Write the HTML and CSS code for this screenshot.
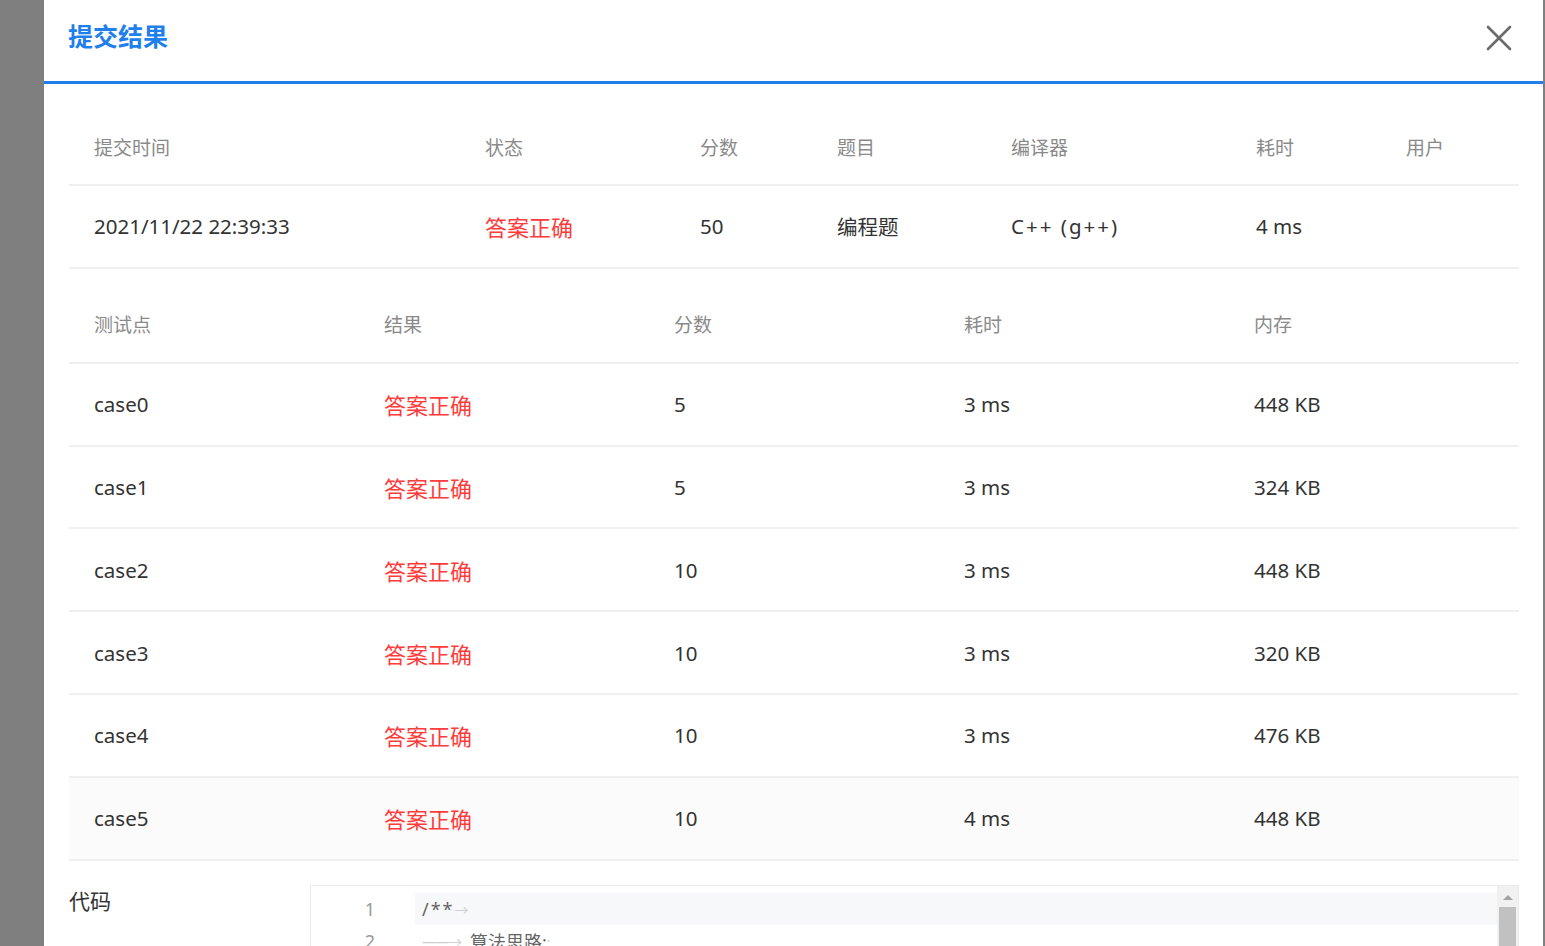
FILE: index.html
```html
<!DOCTYPE html>
<html lang="zh-CN">

<head>
  <meta charset="UTF-8">
  <meta name="viewport" content="width=device-width, initial-scale=1">
  <title>提交结果</title>
  <link rel="stylesheet" href="styles.css">
</head>

<body>

  <div class="drawer">
    <div class="drawer-header">
      <span class="drawer-title">提交结果</span>
      <svg class="close-btn" width="26" height="26" viewBox="0 0 26 26">
        <path d="M2 2 L24 24 M24 2 L2 24" stroke="#6b6b6b" stroke-width="2.6" stroke-linecap="round" fill="none" />
      </svg>
    </div>

    <div class="drawer-body">
      <table class="result-table">
        <colgroup>
          <col style="width:391px">
          <col style="width:215px">
          <col style="width:137px">
          <col style="width:174px">
          <col style="width:245px">
          <col style="width:150px">
          <col>
        </colgroup>
        <thead>
          <tr>
            <th>提交时间</th>
            <th>状态</th>
            <th>分数</th>
            <th>题目</th>
            <th>编译器</th>
            <th>耗时</th>
            <th>用户</th>
          </tr>
        </thead>
        <tbody>
          <tr>
            <td>2021/11/22 22:39:33</td>
            <td class="ok">答案正确</td>
            <td>50</td>
            <td>编程题</td>
            <td><span class="lang">C++ (g++)</span></td>
            <td>4 ms</td>
            <td></td>
          </tr>
        </tbody>
      </table>

      <table class="result-table cases">
        <thead>
          <tr>
            <th>测试点</th>
            <th>结果</th>
            <th>分数</th>
            <th>耗时</th>
            <th>内存</th>
          </tr>
        </thead>
        <tbody>
          <tr><td>case0</td><td class="ok">答案正确</td><td>5</td><td>3 ms</td><td>448 KB</td></tr>
          <tr><td>case1</td><td class="ok">答案正确</td><td>5</td><td>3 ms</td><td>324 KB</td></tr>
          <tr><td>case2</td><td class="ok">答案正确</td><td>10</td><td>3 ms</td><td>448 KB</td></tr>
          <tr><td>case3</td><td class="ok">答案正确</td><td>10</td><td>3 ms</td><td>320 KB</td></tr>
          <tr><td>case4</td><td class="ok">答案正确</td><td>10</td><td>3 ms</td><td>476 KB</td></tr>
          <tr class="hover"><td>case5</td><td class="ok">答案正确</td><td>10</td><td>4 ms</td><td>448 KB</td></tr>
        </tbody>
      </table>

      <div class="code-section">
        <div class="code-label">代码</div>
        <div class="code-box">
          <div class="code-lines">
            <div class="code-line active">
              <span class="line-no">1</span>
              <span class="line-text"><span class="cmt">/**</span><span class="ws">→</span></span>
            </div>
            <div class="code-line">
              <span class="line-no">2</span>
              <span class="line-text"><span class="ws tab">——→</span>算法思路: <span class="ws">·</span></span>
            </div>
            <div class="code-line">
              <span class="line-no">3</span>
              <span class="line-text"></span>
            </div>
          </div>
          <div class="scrollbar">
            <div class="scroll-up"></div>
            <div class="scroll-thumb"></div>
          </div>
        </div>
      </div>
    </div>
  </div>

</body>

</html>
```

FILE: styles.css
```css
* {
  margin: 0;
  padding: 0;
  box-sizing: border-box;
}

html,
body {
  height: 100%;
}

body {
  background: #7f7f7f;
  font-family: "Noto Sans", "Noto Sans CJK SC", sans-serif;
  color: #333;
  overflow: hidden;
}

.drawer {
  margin-left: 44px;
  width: 1499px;
  height: 946px;
  background: #fff;
  overflow: hidden;
}

.drawer-header {
  height: 84px;
  padding: 0 31px 0 24px;
  display: flex;
  align-items: center;
  justify-content: space-between;
  border-bottom: 3px solid #1f7fec;
  padding-bottom: 11px;
}

.drawer-title {
  font-size: 25px;
  font-weight: 700;
  color: #1f7fec;
}

.close-btn {
  display: block;
  margin-top: 5px;
}

.drawer-body {
  padding: 23px 24px 0 25px;
}

.result-table {
  width: 1450px;
  border-collapse: collapse;
  table-layout: fixed;
}

.result-table th,
.result-table td {
  text-align: left;
  padding: 0 0 0 25px;
  border-bottom: 2px solid #f0f0f0;
  white-space: nowrap;
}

.result-table th {
  height: 78px;
  padding-top: 2px;
  font-size: 19px;
  font-weight: 400;
  color: #8a8a8a;
}

.result-table td {
  height: 82.8px;
  font-size: 20.5px;
  color: #333;
}

.result-table td.ok {
  color: #ff3b3b;
  font-size: 22px;
}

.lang {
  letter-spacing: 2px;
}

.cases {
  margin-top: 16px;
}

.cases tr.hover td {
  background: #fbfbfb;
}

.code-section {
  display: flex;
  margin-top: 24px;
}

.code-label {
  width: 241px;
  font-size: 21px;
  color: #333;
}

.code-box {
  width: 1209px;
  height: 120px;
  border: 1px solid #ebebeb;
  display: flex;
  padding-top: 7px;
}

.code-lines {
  flex: 1;
}

.code-line {
  display: flex;
  height: 32px;
  align-items: center;
  font-size: 18px;
}

.line-no {
  width: 104px;
  padding-right: 40px;
  text-align: right;
  color: #9a9a9a;
  flex-shrink: 0;
}

.line-text {
  flex: 1;
  height: 100%;
  display: flex;
  align-items: center;
  padding-left: 7px;
  color: #666;
}

.code-line.active .line-text {
  background: #f7f8fa;
}

.cmt {
  letter-spacing: 2px;
}

.ws {
  color: #d0d0d0;
  font-size: 14px;
}

.ws.tab {
  width: 48px;
  letter-spacing: -1px;
}

.scrollbar {
  width: 21px;
  background: #f1f1f1;
  margin-top: -7px;
  display: flex;
  flex-direction: column;
  align-items: center;
}

.scroll-up {
  width: 0;
  height: 0;
  margin-top: 9px;
  border-left: 5px solid transparent;
  border-right: 5px solid transparent;
  border-bottom: 5px solid #a3a3a3;
}

.scroll-thumb {
  width: 17px;
  flex: 1;
  margin-top: 7px;
  background: #c1c1c1;
}
```
